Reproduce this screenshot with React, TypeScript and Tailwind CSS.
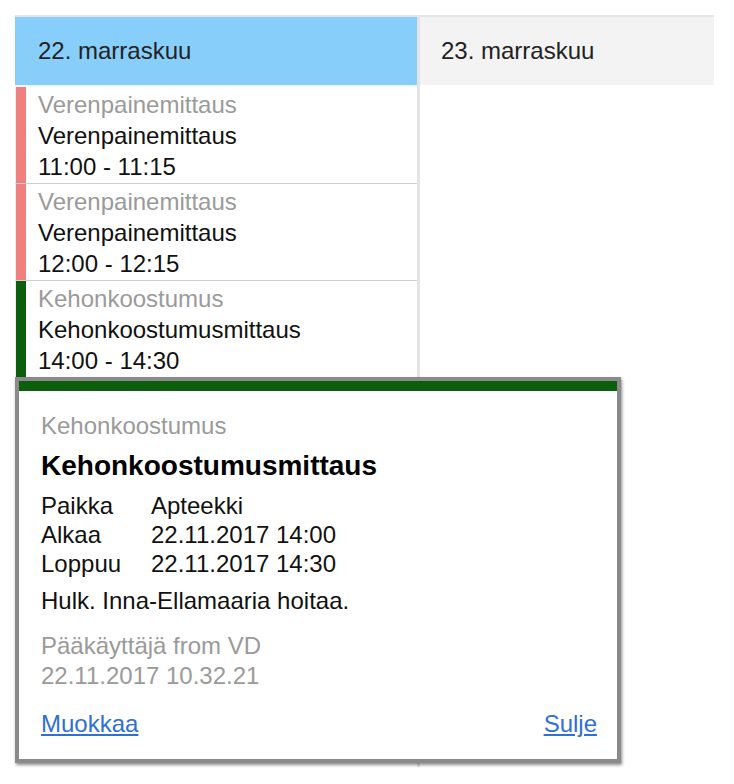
const font = { fontFamily: '"Liberation Sans", Arial, sans-serif' };

interface CalEvent {
  category: string;
  title: string;
  time: string;
  bar: string;
}

const events: CalEvent[] = [
  { category: 'Verenpainemittaus', title: 'Verenpainemittaus', time: '11:00 - 11:15', bar: 'bg-[#f08080]' },
  { category: 'Verenpainemittaus', title: 'Verenpainemittaus', time: '12:00 - 12:15', bar: 'bg-[#f08080]' },
  { category: 'Kehonkoostumus', title: 'Kehonkoostumusmittaus', time: '14:00 - 14:30', bar: 'bg-[#0b5e0b]' },
];

const details = [
  ['Paikka', 'Apteekki'],
  ['Alkaa', '22.11.2017 14:00'],
  ['Loppuu', '22.11.2017 14:30'],
];

function EventPopup() {
  return (
    <div className="absolute left-0 top-[360px] w-[606px] h-[386px] bg-white border-4 border-[#8a8a8a] shadow-[1px_2px_3px_rgba(0,0,0,0.45)] flex flex-col">
      <div className="h-[10px] bg-[#0b5e0b]" />
      <div className="flex flex-col pl-[22px] pr-[20px] pt-[20px] pb-[20px] text-[24px] text-[#111]">
        <div className="leading-[30px] text-[#9a9a9a]">Kehonkoostumus</div>
        <div className="mt-[8px] leading-[34px] text-[28px] font-bold text-black">Kehonkoostumusmittaus</div>
        <div className="mt-[8px] grid grid-cols-[110px_1fr] leading-[29px]">
          {details.map(([label, value]) => (
            <div key={label} className="contents">
              <span>{label}</span>
              <span>{value}</span>
            </div>
          ))}
        </div>
        <div className="mt-[8px] leading-[30px]">Hulk. Inna-Ellamaaria hoitaa.</div>
        <div className="mt-[15px] leading-[30px] text-[#9a9a9a]">
          <div>Pääkäyttäjä from VD</div>
          <div>22.11.2017 10.32.21</div>
        </div>
        <div className="mt-[18px] flex justify-between leading-[30px] text-[#2f6fd6]">
          <a href="#" className="underline">Muokkaa</a>
          <a href="#" className="underline">Sulje</a>
        </div>
      </div>
    </div>
  );
}

export default function App() {
  return (
    <div className="w-[734px] h-[784px] bg-white pt-[15px] pl-[15px]" style={font}>
      <div className="relative w-[699px] h-[752px] border-t-2 border-[#e6e6e6] flex text-[24px] text-[#222]">
        {/* Day 1 */}
        <div className="w-[405px] flex flex-col border-r-[3px] border-[#e4e4e4]">
          <div className="h-[70px] bg-[#87cefa] flex items-center pl-[23px] border-b-2 border-[#eef6fb]">
            22. marraskuu
          </div>
          {events.map((ev, i) => (
            <div key={i} className="flex border-b border-[#cfcfcf] border-l border-l-[#eeeeee]">
              <div className={`w-[10px] ${ev.bar}`} />
              <div className="pl-[12px] pt-[2px] pb-[1px] leading-[31px]">
                <div className="text-[#9a9a9a]">{ev.category}</div>
                <div className="text-[#111]">{ev.title}</div>
                <div className="text-[#111]">{ev.time}</div>
              </div>
            </div>
          ))}
        </div>

        {/* Day 2 */}
        <div className="flex-1 flex flex-col">
          <div className="h-[68px] bg-[#f3f3f3] flex items-center pl-[21px]">23. marraskuu</div>
        </div>

        <EventPopup />
      </div>
    </div>
  );
}
